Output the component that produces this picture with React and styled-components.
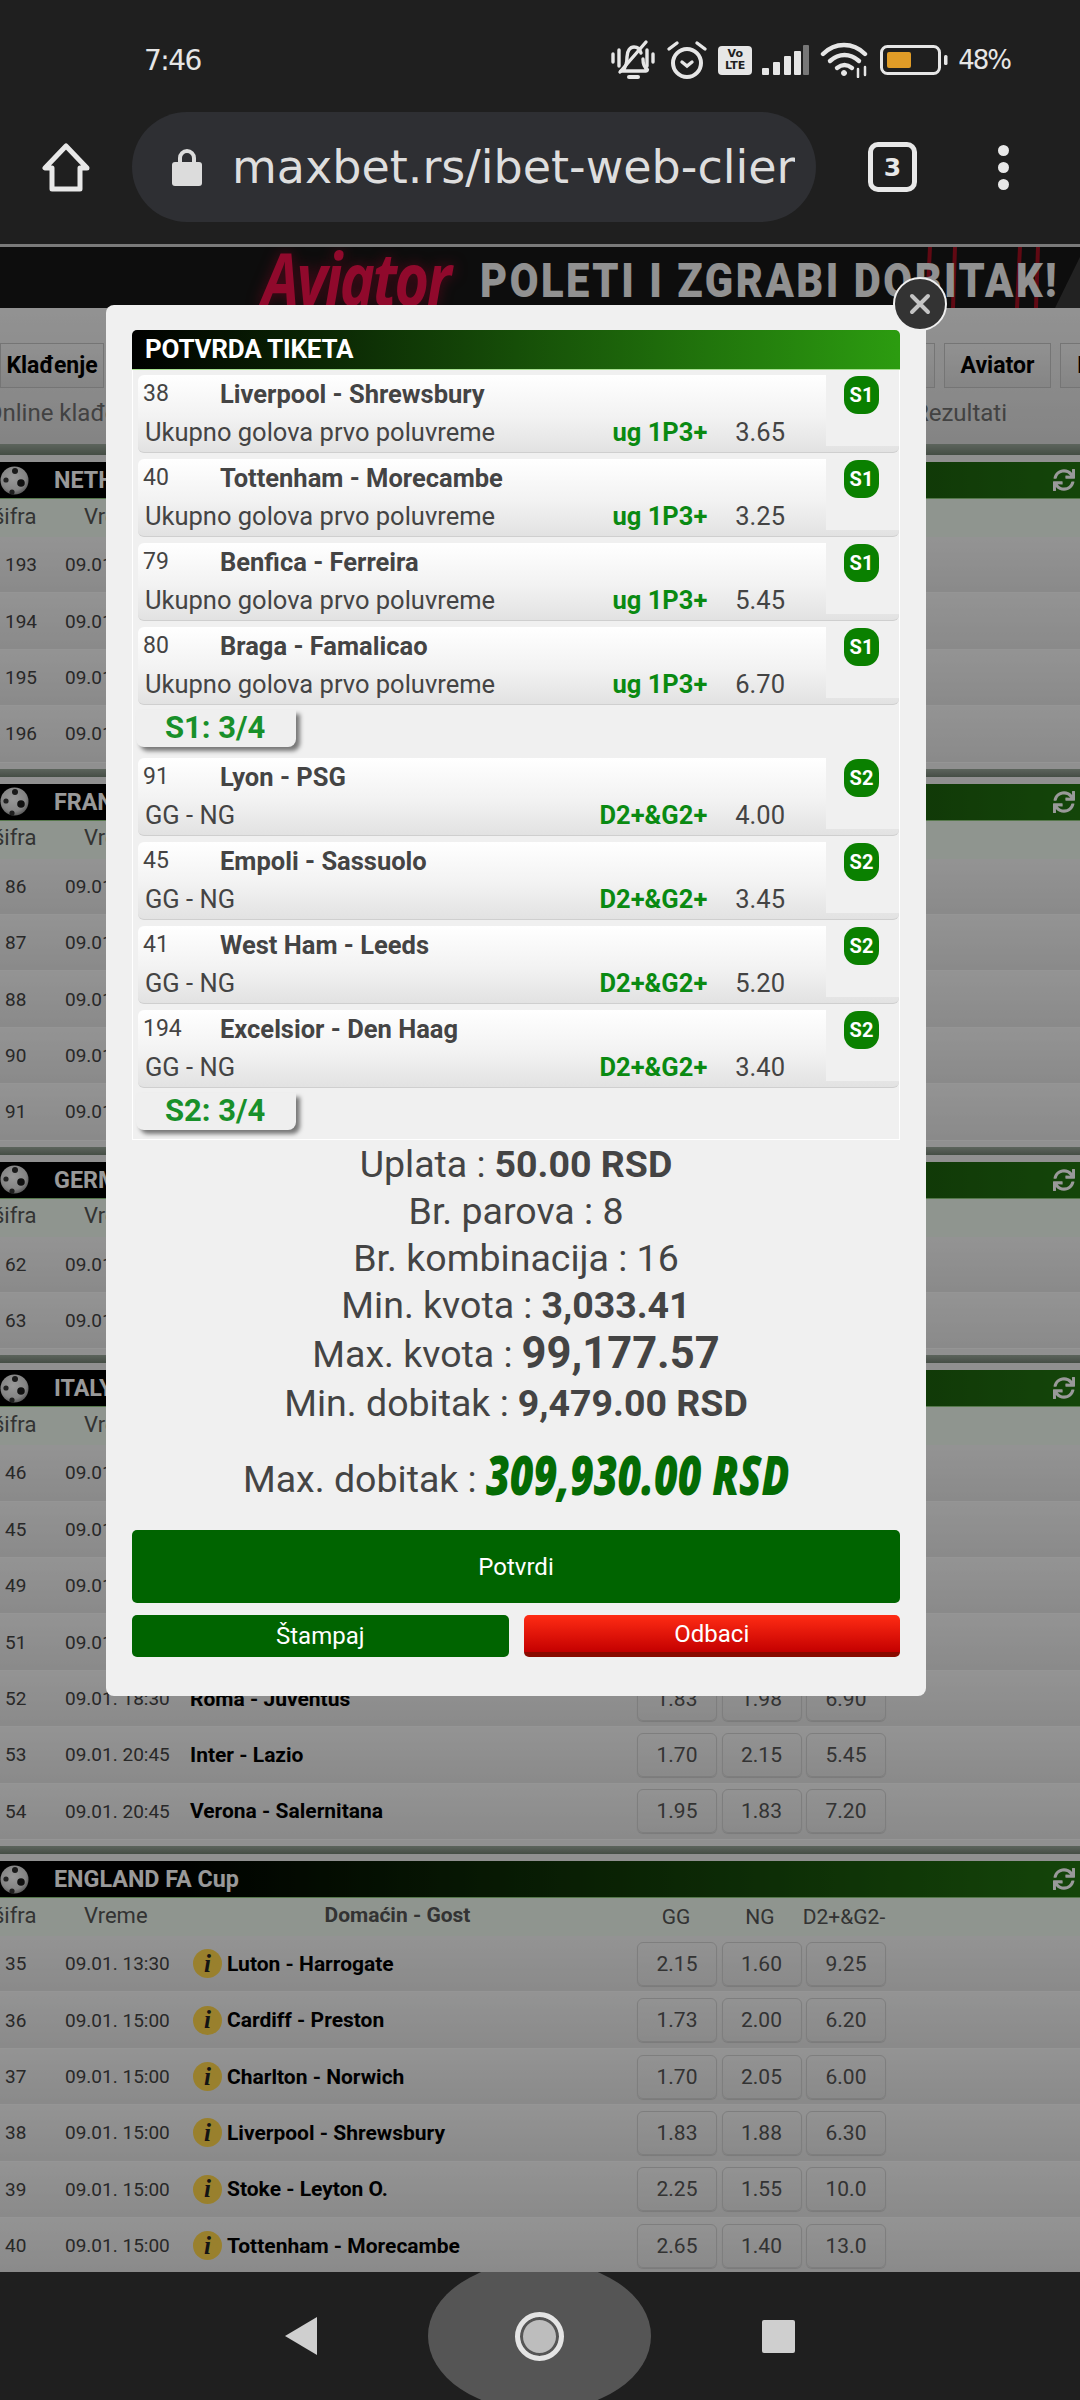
import React from "react";
import styled, { createGlobalStyle } from "styled-components";
import { FaSync } from "react-icons/fa";

const GlobalStyle = createGlobalStyle`
  html, body {
    margin: 0;
    padding: 0;
    background: #1f1f1f;
  }
  * {
    box-sizing: border-box;
  }
  body {
    font-family: Roboto, "Liberation Sans", sans-serif;
  }
`;

const GROUP_ONE = [
  { id: 38, game: "Liverpool - Shrewsbury", odd: "3.65" },
  { id: 40, game: "Tottenham - Morecambe", odd: "3.25" },
  { id: 79, game: "Benfica - Ferreira", odd: "5.45" },
  { id: 80, game: "Braga - Famalicao", odd: "6.70" },
];

const GROUP_TWO = [
  { id: 91, game: "Lyon - PSG", odd: "4.00" },
  { id: 45, game: "Empoli - Sassuolo", odd: "3.45" },
  { id: 41, game: "West Ham - Leeds", odd: "5.20" },
  { id: 194, game: "Excelsior - Den Haag", odd: "3.40" },
];

const LEAGUES = [
  { name: "NETHERLANDS", rows: [{ id: 193 }, { id: 194 }, { id: 195 }, { id: 196 }] },
  { name: "FRANCE", rows: [{ id: 86 }, { id: 87 }, { id: 88 }, { id: 90 }, { id: 91 }] },
  { name: "GERMANY", rows: [{ id: 62 }, { id: 63 }] },
  {
    name: "ITALY",
    rows: [
      { id: 46 },
      { id: 45 },
      { id: 49 },
      { id: 51 },
      { id: 52, time: "18:30", game: "Roma - Juventus", odds: ["1.83", "1.98", "6.90"] },
      { id: 53, time: "20:45", game: "Inter - Lazio", odds: ["1.70", "2.15", "5.45"] },
      { id: 54, time: "20:45", game: "Verona - Salernitana", odds: ["1.95", "1.83", "7.20"] },
    ],
  },
  {
    name: "ENGLAND FA Cup",
    rows: [
      { id: 35, time: "13:30", info: true, game: "Luton - Harrogate", odds: ["2.15", "1.60", "9.25"] },
      { id: 36, time: "15:00", info: true, game: "Cardiff - Preston", odds: ["1.73", "2.00", "6.20"] },
      { id: 37, time: "15:00", info: true, game: "Charlton - Norwich", odds: ["1.70", "2.05", "6.00"] },
      { id: 38, time: "15:00", info: true, game: "Liverpool - Shrewsbury", odds: ["1.83", "1.88", "6.30"] },
      { id: 39, time: "15:00", info: true, game: "Stoke - Leyton O.", odds: ["2.25", "1.55", "10.0"] },
      { id: 40, time: "15:00", info: true, game: "Tottenham - Morecambe", odds: ["2.65", "1.40", "13.0"] },
    ],
  },
];

const BellMuted = () => (
  <svg width="46" height="42" viewBox="0 0 46 42" fill="none" stroke="#e6e6e6" strokeWidth="3.4" strokeLinecap="round">
    <path d="M3 15v8M9 11v16M37 11v16M43 15v8" />
    <path d="M13 31c3-3 4-7 4-13 0-6 3-10 7-10s6 2 7 6M33 20c0 5 1 8 4 10 1 1 0 2-1 2H11" />
    <path d="M10 33 36 3" />
    <path d="M19 38h9" strokeWidth="4" />
  </svg>
);

const AlarmIcon = () => (
  <svg width="42" height="40" viewBox="0 0 42 40" fill="none" stroke="#e6e6e6" strokeLinecap="round">
    <circle cx="21" cy="23" r="14" strokeWidth="4" />
    <path d="M16 22l5 4 5-4" strokeWidth="3.4" />
    <path d="M3 9l8-6M39 9l-8-6" strokeWidth="3.4" />
  </svg>
);

const VolteBadge = styled.div`
  width: 34px;
  height: 29px;
  border-radius: 4px;
  background: #e6e6e6;
  color: #1f1f1f;
  font: 700 11px/12px "DejaVu Sans", sans-serif;
  text-align: center;
  padding-top: 2px;
`;

const SignalIcon = () => (
  <svg width="48" height="30" viewBox="0 0 48 30" fill="#e6e6e6">
    <rect x="0" y="23" width="7" height="7" rx="1" />
    <rect x="11" y="17" width="7" height="13" rx="1" />
    <rect x="22" y="11" width="7" height="19" rx="1" />
    <rect x="32" y="6" width="7" height="24" rx="1" />
    <rect x="41" y="0" width="6" height="30" rx="1" fill="#777" />
  </svg>
);

const WifiIcon = () => (
  <svg width="50" height="36" viewBox="0 0 50 36" fill="none" stroke="#e6e6e6" strokeWidth="4.4" strokeLinecap="round">
    <path d="M3 12C15 0 33 0 45 12" />
    <path d="M10 19c9-8 20-8 29 0" />
    <path d="M17 26c5-4 10-4 15 0" />
    <circle cx="24" cy="31" r="2.5" fill="#e6e6e6" strokeWidth="1" />
    <path d="M38 27v8M45 25v8" strokeWidth="2.5" />
  </svg>
);

const BatteryIcon = () => (
  <svg width="68" height="30" viewBox="0 0 68 30">
    <rect x="1.5" y="1.5" width="58" height="27" rx="6" fill="none" stroke="#e6e6e6" strokeWidth="3" />
    <rect x="7" y="7" width="24" height="16" rx="2" fill="#e09c27" />
    <rect x="64" y="10" width="3.5" height="10" rx="1.5" fill="#e6e6e6" />
  </svg>
);

const HomeIcon = () => (
  <svg width="48" height="50" viewBox="0 0 48 50" fill="none" stroke="#e8e8e8" strokeWidth="5" strokeLinejoin="round">
    <path d="M24 4 3 26h7v21h28V26h7z" />
  </svg>
);

const LockIcon = () => (
  <svg width="30" height="38" viewBox="0 0 30 38" fill="#dcdcdc">
    <path d="M8 16V10a7 7 0 0 1 14 0v6" fill="none" stroke="#dcdcdc" strokeWidth="4" />
    <rect x="0" y="14" width="30" height="24" rx="3" />
  </svg>
);

const SoccerBall = () => (
  <svg width="29" height="29" viewBox="0 0 29 29">
    <defs>
      <radialGradient id="ballShade" cx="0.45" cy="0.4" r="0.7">
        <stop offset="0" stopColor="#ffffff" />
        <stop offset="0.65" stopColor="#dcdcdc" />
        <stop offset="1" stopColor="#707070" />
      </radialGradient>
    </defs>
    <circle cx="14.5" cy="14.5" r="14" fill="url(#ballShade)" />
    <circle cx="15" cy="5" r="3" fill="#2a2a2a" />
    <circle cx="21" cy="17" r="3.8" fill="#1c1c1c" />
    <circle cx="6" cy="14" r="2.6" fill="#3a3a3a" />
    <circle cx="12" cy="26" r="2.6" fill="#333" />
  </svg>
);

const Screen = styled.div`
  width: 1080px;
  height: 2400px;
  display: flex;
  flex-direction: column;
  overflow: hidden;
  background: #1f1f1f;
`;

const StatusBar = styled.div`
  height: 112px;
  display: flex;
  align-items: center;
  justify-content: space-between;
  padding: 8px 70px 0 144px;
  color: #e6e6e6;
  font-family: "DejaVu Sans", sans-serif;
`;

const Clock = styled.div`
  font-size: 28px;
  font-weight: 400;
  letter-spacing: -1.5px;
`;

const StatusIcons = styled.div`
  display: flex;
  align-items: center;
  gap: 10px;
`;

const Percent = styled.div`
  font-size: 26px;
  letter-spacing: -2px;
`;

const Toolbar = styled.div`
  height: 132px;
  display: flex;
  align-items: flex-start;
  padding-left: 42px;
`;

const HomeButton = styled.div`
  width: 48px;
  height: 110px;
  display: flex;
  align-items: center;
  margin-right: 42px;
`;

const UrlPill = styled.div`
  width: 684px;
  height: 110px;
  border-radius: 55px;
  background: #2e2f33;
  display: flex;
  align-items: center;
  padding: 0 21px 0 40px;
  gap: 30px;
`;

const UrlText = styled.div`
  flex: 1;
  overflow: hidden;
  white-space: nowrap;
  font: 400 46px "DejaVu Sans", sans-serif;
  color: #dedede;
`;

const TabCount = styled.div`
  width: 49px;
  height: 50px;
  margin: 30px 0 0 52px;
  border: 5px solid #e8e8e8;
  border-radius: 10px;
  color: #e8e8e8;
  display: flex;
  align-items: center;
  justify-content: center;
  font: 700 25px "DejaVu Sans", sans-serif;
`;

const MenuDots = styled.div`
  width: 12px;
  height: 110px;
  margin-left: 80px;
  display: flex;
  flex-direction: column;
  align-items: center;
  justify-content: center;
  gap: 6px;

  span {
    width: 11px;
    height: 11px;
    border-radius: 50%;
    background: #e8e8e8;
  }
`;

const Page = styled.div`
  position: relative;
  height: 2028px;
  flex: none;
  overflow: hidden;
  border-top: 3px solid #7a7a7a;
  background: #f0f0f0;
`;

const Backdrop = styled.div`
  position: absolute;
  inset: 0;
  background: rgba(0, 0, 0, 0.4);
`;

const Banner = styled.div`
  position: relative;
  height: 61px;
  display: flex;
  align-items: center;
  padding-left: 262px;
  background: #161616;
  overflow: hidden;
`;

const BannerArt = styled.svg`
  position: absolute;
  top: 0;
  right: 0;
`;

const AviatorLogo = styled.div`
  position: relative;
  flex: none;
  width: 218px;
  font: italic 700 74px/61px "Open Sans", sans-serif;
  color: #f0104a;
  letter-spacing: -3px;
  text-shadow: 0 0 14px #80102a;
  transform: scaleX(0.8);
  transform-origin: left center;
`;

const BannerSlogan = styled.div`
  position: relative;
  flex: none;
  padding-top: 6px;
  font: 900 49px/56px Roboto, sans-serif;
  color: #f2f2f2;
  letter-spacing: 3px;
  white-space: nowrap;
  transform: scaleX(0.85);
  transform-origin: left center;
`;

const TopMenu = styled.div`
  height: 136px;
  padding-top: 35px;
  background: linear-gradient(#f4f4f4, #dcdcdc);
`;

const NavRow = styled.div`
  display: flex;
  gap: 9px;
  height: 45px;
`;

const NavButton = styled.div`
  flex: none;
  width: ${(p) => p.$width}px;
  border: 1px solid #c4c4c4;
  background: linear-gradient(#f2f2f2, #dedede);
  font-size: 23px;
  font-weight: 700;
  color: #000;
  display: flex;
  align-items: center;
  justify-content: ${(p) => (p.$left ? "flex-start" : "center")};
  padding-left: ${(p) => (p.$left ? "16px" : "0")};
  white-space: nowrap;
  overflow: hidden;
`;

const SubNav = styled.div`
  display: flex;
  justify-content: space-between;
  margin: 6px 73px 0 -14px;
  font-size: 24px;
  line-height: 38px;
  color: #6e6e6e;
`;

const Band = styled.div`
  height: ${(p) => p.$height}px;
  margin-bottom: 7px;
  background: linear-gradient(#9aa79a, #748274);
`;

const LeagueHeader = styled.div`
  height: 37px;
  display: flex;
  align-items: center;
  padding: 0 5px 0 0;
  background: linear-gradient(90deg, #000 0%, #000 15%, #227410 100%);
  border-bottom: 1px solid #8fc97f;
  color: #fff;
`;

const LeagueName = styled.div`
  flex: 1;
  margin-left: 25px;
  font-size: 23.3px;
  font-weight: 700;
  white-space: nowrap;
`;

const TableHead = styled.div`
  height: 38px;
  display: flex;
  align-items: center;
  background: #eef9ee;
  color: #555;
  font-size: 22px;
  white-space: nowrap;
`;

const HeadCell = styled.div`
  flex: none;
  width: ${(p) => p.$width}px;
  margin-left: ${(p) => p.$shift || 0}px;
  margin-bottom: ${(p) => p.$raise || 0}px;
  text-align: ${(p) => (p.$center ? "center" : "left")};
  font-weight: ${(p) => (p.$bold ? 700 : 400)};
  font-size: ${(p) => (p.$small ? 21 : 22)}px;
`;

const MatchRow = styled.div`
  height: 56.4px;
  display: flex;
  align-items: center;
  background: linear-gradient(#f6f6f6, #e6e6e6);
  border-bottom: 1px solid #f8f8f8;
  color: #444;
  font-size: 19px;
  white-space: nowrap;
`;

const MatchId = styled.div`
  width: 65px;
  padding-left: 5px;
`;

const MatchTime = styled.div`
  width: 125px;
`;

const MatchGame = styled.div`
  width: 447px;
  display: flex;
  align-items: center;
  gap: 5px;
  font-size: 21px;
  font-weight: 700;
  color: #000;
`;

const InfoBadge = styled.span`
  width: 29px;
  height: 29px;
  margin-left: 3px;
  border-radius: 50%;
  background: #ffd64c;
  color: #222;
  display: flex;
  align-items: center;
  justify-content: center;
  font: italic 700 25px "Liberation Serif", serif;
`;

const OddsGroup = styled.div`
  display: flex;
  gap: 4.5px;
`;

const OddButton = styled.div`
  width: 80px;
  height: 44px;
  border: 1px solid #d2d2d2;
  border-radius: 6px;
  background: linear-gradient(#f4f4f4, #e6e6e6);
  color: #555;
  font-size: 21px;
  display: flex;
  align-items: center;
  justify-content: center;
  box-shadow: 0 1px 1px rgba(0, 0, 0, 0.12);
`;

const LeagueEnd = styled.div`
  height: 6px;
`;

const Modal = styled.div`
  position: absolute;
  top: 58px;
  left: 106px;
  width: 820px;
  height: 1391px;
  padding: 25px 26px 0;
  border-radius: 8px;
  background: #f0f0f0;
  color: #444;
`;

const CloseButton = styled.div`
  position: absolute;
  top: -28px;
  right: -21px;
  width: 54px;
  height: 54px;
  border-radius: 50%;
  background: #333;
  border: 2px solid #f0f0f0;
  display: flex;
  align-items: center;
  justify-content: center;
`;

const ModalTitle = styled.div`
  height: 40px;
  padding-left: 13px;
  border-radius: 5px 5px 0 0;
  border-bottom: 1px solid #a6e08f;
  background: linear-gradient(90deg, #000 0%, #2c9c10 100%);
  color: #fff;
  font-size: 26px;
  font-weight: 700;
  line-height: 38px;
  letter-spacing: -0.2px;
`;

const TicketBox = styled.div`
  border: 1px solid #fff;
  border-top: none;
  padding: 5px 0 0 5px;
  height: 770px;
`;

const TicketRow = styled.div`
  height: 78px;
  margin-bottom: 6px;
  display: flex;
  border-radius: 6px;
  border-bottom: 1px solid #cfcfcf;
  background: linear-gradient(#fff 0%, #f2f2f2 55%, #e2e2e2 100%);
`;

const TicketMain = styled.div`
  flex: 1;
  min-width: 0;
  padding: 4px 41px 0 5px;
`;

const TicketTop = styled.div`
  display: flex;
  height: 29px;
  align-items: center;
  margin-bottom: 10px;
`;

const TicketId = styled.div`
  width: 77px;
  font-size: 23px;
`;

const TicketGame = styled.div`
  font-size: 25.5px;
  font-weight: 700;
`;

const TicketBottom = styled.div`
  display: flex;
  align-items: center;
  height: 28px;
  padding-left: 2px;
  font-size: 25.5px;
`;

const TicketMarket = styled.div`
  flex: 1;
`;

const TicketPick = styled.div`
  color: #0a8a12;
  font-weight: 700;
  margin-right: 28px;
`;

const TicketSide = styled.div`
  width: 73px;
  height: 71px;
  padding-right: 2px;
  background: #f0f0f0;
  display: flex;
  justify-content: center;
`;

const SystemBadge = styled.div`
  width: 35px;
  height: 38px;
  margin-top: 1px;
  border-radius: 14px;
  background: #0a8000;
  color: #fff;
  font-size: 20px;
  font-weight: 700;
  display: flex;
  align-items: center;
  justify-content: center;
`;

const SystemTag = styled.div`
  width: 160px;
  height: 37px;
  margin: -1px 0 11px -2px;
  padding-left: 29px;
  border-radius: 0 0 8px 8px;
  background: #efefef;
  box-shadow: 4px 4px 4px rgba(0, 0, 0, 0.5);
  color: #18902a;
  font-size: 31px;
  font-weight: 700;
  line-height: 35px;
`;

const SummaryLine = styled.div`
  height: ${(p) => p.$height || 47}px;
  margin-top: ${(p) => p.$gap || 0}px;
  padding-top: ${(p) => p.$drop || 0}px;
  display: flex;
  align-items: center;
  justify-content: center;
  gap: 9px;
  font-size: 37.5px;
  white-space: nowrap;
`;

const SummaryValue = styled.b`
  font-size: ${(p) => p.$size || 37.5}px;
  font-weight: 700;
`;

/* condensed heavy italic: no such face installed, so squeeze Open Sans */
const BigWin = styled.span`
  display: inline-block;
  margin-right: -96px;
  color: #046b04;
  font: italic 800 54px "Open Sans", sans-serif;
  transform: translateY(-5px) scaleX(0.76);
  transform-origin: left center;
`;

const Actions = styled.div`
  margin-top: 24px;
  display: flex;
  flex-wrap: wrap;
  gap: 12px 15px;
`;

const ActionButton = styled.div`
  flex: ${(p) => (p.$wide ? "0 0 100%" : "1")};
  height: ${(p) => (p.$wide ? 73 : 42)}px;
  border-radius: 5px;
  background: ${(p) => (p.$danger ? "linear-gradient(#ff2c14, #c40000)" : "#006400")};
  border-bottom: ${(p) => (p.$danger ? "5px solid #8a0a00" : "none")};
  color: #fff;
  font-size: 24px;
  display: flex;
  align-items: center;
  justify-content: center;
`;

const NavBar = styled.div`
  flex: 1;
  overflow: hidden;
  display: flex;
  align-items: center;
  justify-content: center;
  gap: 111px;
`;

const BackTriangle = styled.div`
  width: 32px;
  height: 38px;
  background: #cfcfcf;
  clip-path: polygon(100% 0, 100% 100%, 0 50%);
`;

const HomeBlob = styled.div`
  flex: none;
  width: 223px;
  height: 150px;
  border-radius: 50%;
  background: #555;
  display: flex;
  align-items: center;
  justify-content: center;
`;

const HomeRing = styled.div`
  width: 49px;
  height: 49px;
  border-radius: 50%;
  border: 5px solid #e4e4e4;
  background: #bdbdbd;
  box-shadow: inset 0 0 0 3px #555;
`;

const RecentSquare = styled.div`
  width: 33px;
  height: 33px;
  border-radius: 2px;
  background: #cfcfcf;
`;

const TicketGroup = ({ rows, label, tag }) => (
  <>
    {rows.map((row) => (
      <TicketRow key={row.id}>
        <TicketMain>
          <TicketTop>
            <TicketId>{row.id}</TicketId>
            <TicketGame>{row.game}</TicketGame>
          </TicketTop>
          <TicketBottom>
            <TicketMarket>{tag === "S1" ? "Ukupno golova prvo poluvreme" : "GG - NG"}</TicketMarket>
            <TicketPick>{tag === "S1" ? "ug 1P3+" : "D2+&G2+"}</TicketPick>
            <div>{row.odd}</div>
          </TicketBottom>
        </TicketMain>
        <TicketSide>
          <SystemBadge>{tag}</SystemBadge>
        </TicketSide>
      </TicketRow>
    ))}
    <SystemTag>{label}</SystemTag>
  </>
);

const League = ({ league }) => (
  <div>
    <LeagueHeader>
      <SoccerBall />
      <LeagueName>{league.name}</LeagueName>
      <FaSync size={22} color="#fff" />
    </LeagueHeader>
    <TableHead>
      <HeadCell $width={91} $shift={-7} $raise={4}>šifra</HeadCell>
      <HeadCell $width={166} $raise={4}>Vreme</HeadCell>
      <HeadCell $width={295} $center $bold $small $raise={4}>Domaćin - Gost</HeadCell>
      <HeadCell $width={84} $shift={89} $center $small>GG</HeadCell>
      <HeadCell $width={84} $center $small>NG</HeadCell>
      <HeadCell $width={84} $center $small>D2+&G2-</HeadCell>
    </TableHead>
    {league.rows.map((row) => (
      <MatchRow key={row.id}>
        <MatchId>{row.id}</MatchId>
        <MatchTime>09.01. {row.time}</MatchTime>
        <MatchGame>
          {row.info && <InfoBadge>i</InfoBadge>}
          {row.game}
        </MatchGame>
        {row.odds && (
          <OddsGroup>
            {row.odds.map((odd, i) => (
              <OddButton key={i}>{odd}</OddButton>
            ))}
          </OddsGroup>
        )}
      </MatchRow>
    ))}
    <LeagueEnd />
    <Band $height={8} />
  </div>
);

const App = () => {
  return (
    <Screen>
      <GlobalStyle />
      <StatusBar>
        <Clock>7:46</Clock>
        <StatusIcons>
          <BellMuted />
          <AlarmIcon />
          <VolteBadge>Vo<br />LTE</VolteBadge>
          <SignalIcon />
          <WifiIcon />
          <BatteryIcon />
          <Percent>48%</Percent>
        </StatusIcons>
      </StatusBar>
      <Toolbar>
        <HomeButton>
          <HomeIcon />
        </HomeButton>
        <UrlPill>
          <LockIcon />
          <UrlText>maxbet.rs/ibet-web-client</UrlText>
        </UrlPill>
        <TabCount>3</TabCount>
        <MenuDots>
          <span />
          <span />
          <span />
        </MenuDots>
      </Toolbar>
      <Page>
        <Banner>
          <BannerArt width="230" height="61" viewBox="0 0 230 61" fill="none">
            <path d="M80 0l-3 61M105 0l-2 61M170 0l-3 61M188 0l-2 61" stroke="#a01020" strokeWidth="4" />
            <path d="M205 61 230 10v51z" fill="#3a3a3a" />
          </BannerArt>
          <AviatorLogo>Aviator</AviatorLogo>
          <BannerSlogan>POLETI I ZGRABI DOBITAK!</BannerSlogan>
        </Banner>
        <TopMenu>
          <NavRow>
            <NavButton $width={104}>Klađenje</NavButton>
            <NavButton $width={822} />
            <NavButton $width={107}>Aviator</NavButton>
            <NavButton $width={60} $left>I</NavButton>
          </NavRow>
          <SubNav>
            <span>Online klađenje</span>
            <span>Rezultati</span>
          </SubNav>
        </TopMenu>
        <Band $height={11} />
        {LEAGUES.map((league) => (
          <League key={league.name} league={league} />
        ))}
        <Backdrop />
        <Modal>
          <CloseButton>
            <svg width="24" height="24" viewBox="0 0 24 24" stroke="#c4c4c4" strokeWidth="4" strokeLinecap="round">
              <path d="M4 4l16 16M20 4 4 20" />
            </svg>
          </CloseButton>
          <ModalTitle>POTVRDA TIKETA</ModalTitle>
          <TicketBox>
            <TicketGroup rows={GROUP_ONE} tag="S1" label="S1: 3/4" />
            <TicketGroup rows={GROUP_TWO} tag="S2" label="S2: 3/4" />
          </TicketBox>
          <SummaryLine>Uplata : <SummaryValue>50.00 RSD</SummaryValue></SummaryLine>
          <SummaryLine>Br. parova : 8</SummaryLine>
          <SummaryLine>Br. kombinacija : 16</SummaryLine>
          <SummaryLine>Min. kvota : <SummaryValue>3,033.41</SummaryValue></SummaryLine>
          <SummaryLine $height={51}>Max. kvota : <SummaryValue $size={43.5}>99,177.57</SummaryValue></SummaryLine>
          <SummaryLine>Min. dobitak : <SummaryValue>9,479.00 RSD</SummaryValue></SummaryLine>
          <SummaryLine $height={60} $gap={20} $drop={6}>Max. dobitak : <BigWin>309,930.00 RSD</BigWin></SummaryLine>
          <Actions>
            <ActionButton $wide>Potvrdi</ActionButton>
            <ActionButton>Štampaj</ActionButton>
            <ActionButton $danger>Odbaci</ActionButton>
          </Actions>
        </Modal>
      </Page>
      <NavBar>
        <BackTriangle />
        <HomeBlob>
          <HomeRing />
        </HomeBlob>
        <RecentSquare />
      </NavBar>
    </Screen>
  );
};

export default App;
